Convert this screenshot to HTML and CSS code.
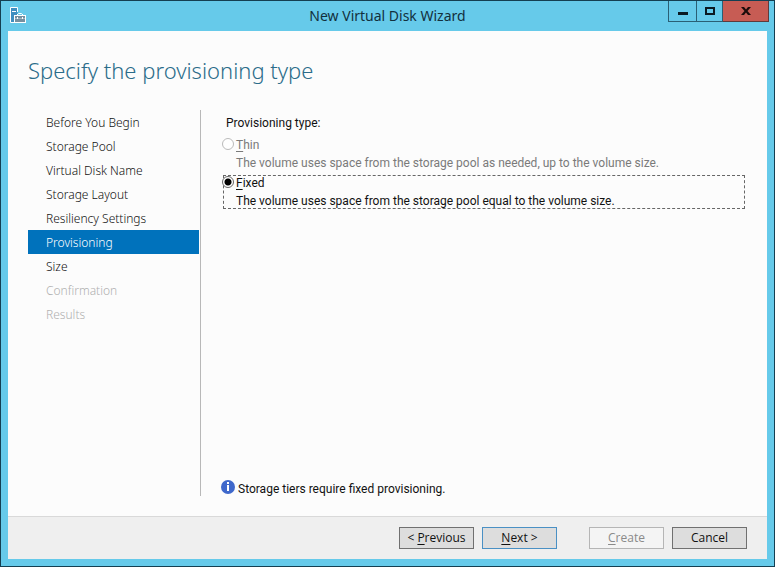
FILE: index.html
```html
<!DOCTYPE html>
<html lang="en">
<head>
<meta charset="UTF-8" />
<meta name="viewport" content="width=device-width, initial-scale=1" />
<title>New Virtual Disk Wizard</title>
<link rel="stylesheet" href="styles.css">
</head>
<body>
<div class="window">
  <header class="titlebar">
    <svg class="app-icon" width="17" height="17" viewBox="0 0 17 17" aria-hidden="true">
      <path d="M0.5 0.5h7v7l-3 2v6h-4z" fill="#3f8fc0" />
      <path d="M7.500 5V0.500h-7v15h4M2 4.500h4" fill="none" stroke="#fff" />
      <rect x="4.500" y="8.500" width="11" height="7" fill="#7590a0" stroke="#fff" />
      <path d="M7 8L8.500 6.500h3L13 8" fill="none" stroke="#fff" />
      <path d="M5 11.500h10" stroke="#a5b7c1" />
      <path d="M7.500 10v2M12.500 10v2" stroke="#fff" />
    </svg>
    <div class="title">New Virtual Disk Wizard</div>
    <div class="window-controls">
      <button class="control minimize" aria-label="Minimize">
        <svg width="10" height="8" viewBox="0 0 10 8"><path d="M0 5h10v3H0z" fill="#0b1a22" /></svg>
      </button>
      <button class="control maximize" aria-label="Maximize">
        <svg width="10" height="8" viewBox="0 0 10 8"><rect x="1" y="1" width="8" height="6" fill="none" stroke="#0b1a22" stroke-width="2" /></svg>
      </button>
      <button class="control close" aria-label="Close">
        <svg width="10" height="8" viewBox="0 0 10 8"><path d="M0 0h3l2 2.500L7 0h3L6.500 4L10 8H7L5 5.500L3 8H0l3.500-4z" fill="#1d0c0b" /></svg>
      </button>
    </div>
  </header>

  <main class="content">
    <h1>Specify the provisioning type</h1>
    <div class="columns">
      <nav class="steps">
        <a href="#">Before You Begin</a>
        <a href="#">Storage Pool</a>
        <a href="#">Virtual Disk Name</a>
        <a href="#">Storage Layout</a>
        <a href="#">Resiliency Settings</a>
        <a href="#" class="active" aria-current="step">Provisioning</a>
        <a href="#">Size</a>
        <a class="disabled">Confirmation</a>
        <a class="disabled">Results</a>
      </nav>

      <section class="page">
        <div class="group-label" id="type-label">Provisioning type:</div>
        <div class="options" role="radiogroup" aria-labelledby="type-label">
          <div class="option disabled">
            <input type="radio" name="type" id="thin" disabled>
            <label for="thin"><u>T</u>hin</label>
            <p>The volume uses space from the storage pool as needed, up to the volume size.</p>
          </div>
          <div class="option focused">
            <input type="radio" name="type" id="fixed" checked>
            <label for="fixed"><u>F</u>ixed</label>
            <p>The volume uses space from the storage pool equal to the volume size.</p>
          </div>
        </div>
        <div class="note">
          <svg width="14" height="14" viewBox="0 0 14 14" aria-hidden="true">
            <circle cx="7" cy="7" r="7" fill="#3f68cb" />
            <path d="M6 2h2v2H6zM6 5h2v6H6z" fill="#fff" />
          </svg>
          <span>Storage tiers require fixed provisioning.</span>
        </div>
      </section>
    </div>
  </main>

  <footer class="actions">
    <button class="btn">&lt; <u>P</u>revious</button>
    <button class="btn default"><u>N</u>ext &gt;</button>
    <button class="btn create" disabled><u>C</u>reate</button>
    <button class="btn">Cancel</button>
  </footer>
</div>
</body>
</html>
```

FILE: styles.css
```css
* { box-sizing: border-box; }
body { margin: 0; font-family: "Open Sans", "Noto Sans", sans-serif; font-size: 12px; line-height: 16px; color: #111; }
button { font: inherit; color: inherit; }
u { text-underline-offset: 2px; }

.window { display: flex; flex-direction: column; min-height: 100vh; padding: 0 7px 7px; background: #66caea; border: 1px solid #143f52; }

.titlebar { display: grid; grid-template-columns: 107px 1fr 107px; height: 30px; }
.app-icon { margin: 6px 0 0 2px; }
.title { text-align: center; font-family: "Noto Sans", sans-serif; font-size: 14px; line-height: 30px; color: #12303d; }
.window-controls { display: flex; justify-content: flex-end; align-items: flex-start; margin-right: -2px; }
.control { display: flex; align-items: center; justify-content: center; width: 29px; height: 21px; padding: 0; background: transparent; border: 1px solid #2a5f75; border-top: none; }
.control + .control { border-left: none; }
.maximize { width: 26px; }
.close { width: 46px; background: #c75c54; border-color: #5f3a3c; }

.content { display: flex; flex-direction: column; flex: 1; padding: 23px 22px 20px 20px; background: #fcfcfc; }
h1 { margin: 0 0 24px; font-family: "Noto Sans", "Open Sans", sans-serif; font-size: 22px; font-weight: 300; line-height: 32px; color: #2b6c8a; }

.columns { display: flex; flex: 1; }
.steps { flex: 0 0 173px; padding-right: 1px; border-right: 1px solid #b8b8b8; font-family: "Noto Sans", "Open Sans", sans-serif; }
.steps a { display: block; height: 24px; padding-left: 18px; line-height: 26px; font-weight: 300; color: #111; text-decoration: none; }
.steps a.active { background: #0072bc; color: #fff; }
.steps a.disabled { color: #b0b0b0; }

.page { display: flex; flex-direction: column; flex: 1; padding-left: 21px; font-family: Roboto, "Open Sans", sans-serif; }
.group-label { margin: 5px 0 6px 4px; }
.options { display: grid; gap: 4px; margin-left: 1px; }
.option { display: grid; grid-template-columns: 12px 1fr; border: 1px solid transparent; }
.option.focused { border: 1px dashed #666; }
.option.disabled { color: #7a7a7a; }
.option label { line-height: 14px; }
.option p { grid-column: 2; height: 18px; margin: 0; line-height: 22px; }
.option input { appearance: none; width: 12px; height: 12px; margin: 0 0 0 -2px; border: 1px solid #666; border-radius: 50%; background: #fff; }
.option input:checked { background: radial-gradient(circle, #000 3px, #fff 4px); }
.option input:disabled { border-color: #bbb; }

.note { display: flex; gap: 3px; height: 16px; margin: auto 0 0 -1px; line-height: 18px; }

.actions { display: flex; justify-content: flex-end; gap: 8px; padding: 10px 20px; background: #efefef; border-top: 1px solid #d9d9d9; }
.btn { width: 75px; height: 22px; padding: 0; line-height: 20px; background: #ddd; border: 1px solid #707070; }
.btn.default { border-color: #4a90c4; }
.btn.create { margin-left: 24px; }
.btn:disabled { color: #8a8a8a; background: #f4f4f4; border-color: #b5b5b5; }
```
